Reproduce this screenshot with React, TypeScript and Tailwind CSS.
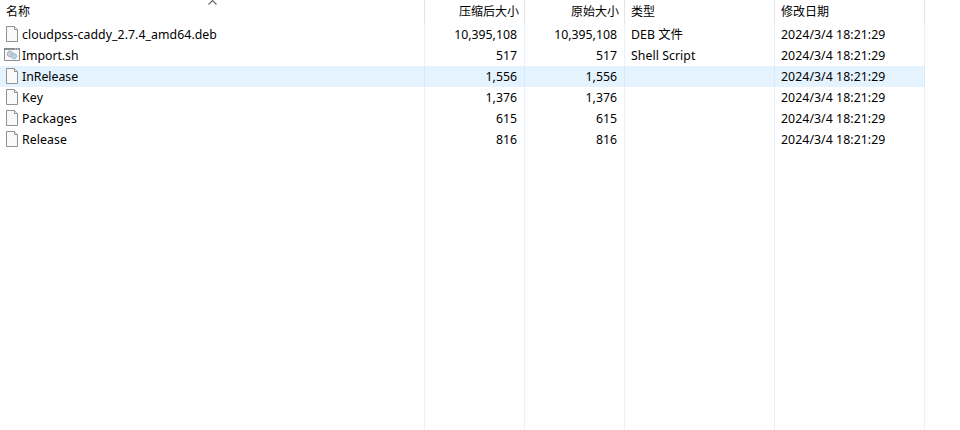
import React from "react";

type Entry = { name: string; size: string; type: string; script?: boolean; active?: boolean; spacing: string };

const DATE = "2024/3/4 18:21:29";

const entries: Entry[] = [
  { name: "cloudpss-caddy_2.7.4_amd64.deb", size: "10,395,108", type: "DEB 文件", spacing: "tracking-[0.06px]" },
  { name: "Import.sh", size: "517", type: "Shell Script", script: true, spacing: "tracking-[-0.06px]" },
  { name: "InRelease", size: "1,556", type: "", active: true, spacing: "tracking-[0px]" },
  { name: "Key", size: "1,376", type: "", spacing: "tracking-[0.2px]" },
  { name: "Packages", size: "615", type: "", spacing: "tracking-[0.1px]" },
  { name: "Release", size: "816", type: "", spacing: "tracking-[0.1px]" },
];

function FileIcon() {
  return (
    <svg width="16" height="16" viewBox="0 0 16 16" className="mt-[2px] shrink-0 self-start">
      <path d="M2.5.5h8l3 3v12h-11z" fill="#f8f9f9" stroke="#929292" />
      <path d="M10.5.5v3h3" fill="#e8e8e8" stroke="#929292" />
    </svg>
  );
}

function ScriptIcon() {
  return (
    <svg width="16" height="16" viewBox="0 0 16 16" className="mt-[2px] shrink-0 self-start">
      <path d="M.5 1.5h15v12H.5z" fill="#fafafa" stroke="#8b8e91" />
      <path d="M0 2h16" stroke="#8b8e91" strokeWidth="2" />
      <path d="M11 2h1M13 2h1" stroke="#e8e8e8" />
      <circle cx="6" cy="7" r="2.5" fill="#eceeef" stroke="#9aa0a6" strokeWidth=".9" />
      <circle cx="6" cy="7" r="3.1" fill="none" stroke="#9aa0a6" strokeWidth=".7" strokeDasharray="1.2 1.23" />
      <circle cx="6" cy="7" r=".9" fill="#fff" stroke="#8e969d" strokeWidth=".6" />
      <circle cx="10" cy="9.2" r="2.3" fill="#d8ebf7" stroke="#83aeca" strokeWidth=".9" />
      <circle cx="10" cy="9.2" r="2.9" fill="none" stroke="#83aeca" strokeWidth=".7" strokeDasharray="1.1 1.18" />
      <circle cx="10" cy="9.2" r=".9" fill="#fff" stroke="#83aeca" strokeWidth=".6" />
    </svg>
  );
}

const columns = [
  { label: "名称", align: "pl-[6px]" },
  { label: "压缩后大小", align: "justify-end pr-[5px]" },
  { label: "原始大小", align: "justify-end pr-[5px]" },
  { label: "类型", align: "pl-[6px]" },
  { label: "修改日期", align: "pl-[6px]" },
];

export default function App() {
  return (
    <div className="flex h-[430px] w-[960px] flex-col overflow-hidden bg-white font-['Noto_Sans','Noto_Sans_CJK_SC',sans-serif] text-[12.3px] leading-[21px] whitespace-nowrap text-black">
      <div className="grid h-[24px] w-[925px] shrink-0 grid-cols-[425px_100px_100px_150px_150px] text-[12px]">
        {columns.map((c, i) => (
          <div key={c.label} className={`relative flex items-center border-r border-[#e5e5e5] pb-[2px] ${c.align}`}>
            {c.label}
            {i === 0 && (
              <svg width="9" height="5" viewBox="0 0 9 5" className="absolute top-0 left-[208px]">
                <path d="M.5 4.5l4-4 4 4" fill="none" stroke="#666" strokeWidth="1.1" />
              </svg>
            )}
          </div>
        ))}
      </div>
      {entries.map((e) => {
        const cell = `flex items-center border-r ${e.active ? "border-[#d5eaff] bg-[#e5f3ff]" : "border-[#e8f2fe]"}`;
        return (
          <div key={e.name} className="grid h-[21px] w-[925px] shrink-0 grid-cols-[425px_100px_100px_150px_150px]">
            <div className={`${cell} gap-[2px] pl-[4px]`}>
              {e.script ? <ScriptIcon /> : <FileIcon />}
              <span className={e.spacing}>{e.name}</span>
            </div>
            <div className={`${cell} justify-end pr-[7px]`}>{e.size}</div>
            <div className={`${cell} justify-end pr-[7px]`}>{e.size}</div>
            <div className={`${cell} pl-[6px] tracking-[0.06px]`}>{e.type}</div>
            <div className={`${cell} pl-[6px] tracking-[0.06px]`}>{DATE}</div>
          </div>
        );
      })}
      <div className="grid w-[925px] flex-1 grid-cols-[425px_100px_100px_150px_150px]">
        {columns.map((c) => (
          <div key={c.label} className="border-r border-[#e8f2fe]" />
        ))}
      </div>
    </div>
  );
}
